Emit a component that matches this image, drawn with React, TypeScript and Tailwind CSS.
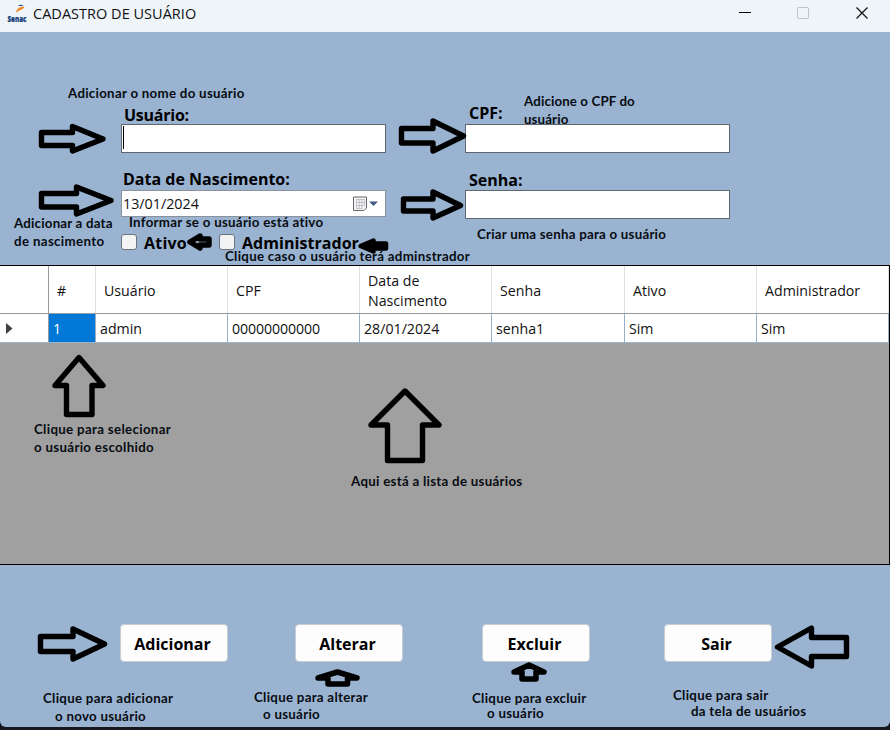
import React from "react";

const arrows: { points: string; width: number; fill?: string }[] = [
  { points: "41.5,132.5 72.5,132.5 72.5,126.5 103,139 72.5,151 72.5,145.5 41.5,145.5", width: 5.4 },
  { points: "41.5,193.5 76.5,193.5 76.5,187 111,200.5 76.5,214 76.5,207 41.5,207", width: 5.4 },
  { points: "401.5,128.5 433,128.5 433,121 463.5,136 433,151 433,143 401.5,143", width: 5.4 },
  { points: "403.5,199 433,199 433,192 460.5,205.5 433,218 433,211 403.5,211", width: 5.4 },
  { points: "209,239 200,239 200,236 190,242 200,248 200,245 209,245", width: 5.5 },
  { points: "386,243.5 373.5,243.5 373.5,240.5 360.5,246 373.5,251.5 373.5,248.5 386,248.5", width: 4.5, fill: "black" },
  { points: "79,357.5 103,385.5 92,385.5 92,414.5 66.5,414.5 66.5,385.5 55,385.5", width: 5.4 },
  { points: "405,391 439,425 422.5,425 422.5,460.5 387.5,460.5 387.5,425 371,425", width: 5.4 },
  { points: "40.5,636.5 73,636.5 73,629 104.5,644 73,659 73,651.5 40.5,651.5", width: 5.4 },
  { points: "337.5,672 357,678 347.5,678 347.5,684 328,684 328,678 318,678", width: 5.5 },
  { points: "529,665 544,672 536,672 536,679 522,679 522,672 514,672", width: 5.5 },
  { points: "777.5,647 811.5,628 811.5,637.5 846.5,637.5 846.5,656.5 811.5,656.5 811.5,666", width: 5.4 },
];

function Note({ className, tracking = "tracking-[0.28px]", children }: { className: string; tracking?: string; children: React.ReactNode }) {
  return (
    <div className={`absolute whitespace-nowrap font-['Lato',sans-serif] text-[13.3px] font-bold leading-[18px] text-[#080c12] ${tracking} ${className}`}>
      {children}
    </div>
  );
}

function Label({ className = "", children }: { className?: string; children: React.ReactNode }) {
  return <label className={`block whitespace-nowrap text-[16px] font-bold leading-[20px] text-black ${className}`}>{children}</label>;
}

function SenacLogo() {
  return (
    <svg className="h-[20px] w-[22px] overflow-visible" viewBox="0 0 22 20">
      <path d="M9.5 9 C9 5.5 11 3 17.5 2.5 C16.5 6 12 5.5 9.5 9Z" fill="#f08a24" />
      <path d="M11 2 Q13.5 -0.5 16.5 2Z" fill="#24508c" />
      <text x="0.5" y="17.5" textLength="19" lengthAdjust="spacingAndGlyphs" fontFamily="Open Sans" fontSize="9.5" fontWeight="800" fill="#143f7c" stroke="#143f7c" strokeWidth=".2">
        Senac
      </text>
    </svg>
  );
}

const headers = ["#", "Usuário", "CPF", "Data de Nascimento", "Senha", "Ativo", "Administrador"];
const values = ["1", "admin", "00000000000", "28/01/2024", "senha1", "Sim", "Sim"];
const columns = "grid grid-cols-[49px_47px_132px_132px_132px_133px_132px_132px]";

function UsersTable() {
  return (
    <div className="h-[300px] border-y border-r border-black bg-[#a0a0a0] text-[14.2px] text-[#111]">
      <div className={`${columns} h-[48px] border-b border-[#979b9f] bg-white`}>
        <div className="border-r border-[#979b9f]" />
        {headers.map((h) => (
          <div key={h} className="flex items-center border-r border-[#dedfe1] pt-[2px] pl-[8px] leading-[20px]">
            <span className="w-[100px]">{h}</span>
          </div>
        ))}
      </div>
      <div className={`${columns} h-[29px] border-b border-[#a0b4c8] bg-white`}>
        <div className="flex items-center border-r border-[#979b9f] pl-[6px] pt-px">
          <svg className="h-[11px] w-[7px]" viewBox="0 0 7 11"><path d="M0 0L6.5 5.5L0 11Z" fill="#404040" /></svg>
        </div>
        {values.map((v, i) => (
          <div key={i} className={`flex items-center border-r border-[#9aafc4] pl-[4px] pt-px ${i === 0 ? "bg-[#0078d7] text-white" : ""} ${i === 2 ? "tracking-[-0.1px]" : ""}`}>{v}</div>
        ))}
      </div>
    </div>
  );
}

function Field({ children }: { children?: React.ReactNode }) {
  return <div className="relative z-10 h-[29px] w-[265px] border border-[#5f676f] bg-white">{children}</div>;
}

function Check() {
  return <span className="h-[16px] w-[16px] rounded-[3px] border border-[#6b747d] bg-[#f3f3f3]" />;
}

function Button({ children }: { children: React.ReactNode }) {
  return <button className="h-[38px] w-[108px] rounded-[4px] border border-[#c8cdd3] bg-[#fdfdfd] pr-[3px] pt-[2px] text-[16px] font-bold text-black">{children}</button>;
}

export default function App() {
  return (
    <div className="relative h-[730px] w-[890px] overflow-hidden bg-[#15191e] font-['Open_Sans','Noto_Sans',sans-serif]">
      <div className="flex h-[727px] flex-col overflow-hidden rounded-b-[6px] bg-[#99b3d0]">
        <header className="flex h-[32px] shrink-0 items-start bg-[#eff4f9] pl-[7px]">
          <div className="mt-[4px]"><SenacLogo /></div>
          <h1 className="ml-[4px] mt-[4px] text-[14.5px] leading-[20px] tracking-[0.02px] text-[#111]">CADASTRO DE USUÁRIO</h1>
          <svg className="ml-auto mr-[21px] mt-[6px] h-[14px] w-[130px]" viewBox="0 0 130 14" fill="none">
            <path d="M0 6.5H12" stroke="#000" />
            <rect x="58.5" y="1.5" width="11" height="11" rx="1" stroke="#bcc1c6" />
            <path d="M117.5 1.5L128.5 12.5M128.5 1.5L117.5 12.5" stroke="#111" strokeWidth="1.2" />
          </svg>
        </header>

        <section className="flex h-[233px] shrink-0 gap-[79px] pl-[121px]">
          <div className="w-[265px] pt-[73px]">
            <Label className="h-[19px] pl-[3px] tracking-[-0.25px]">Usuário:</Label>
            <Field><div className="ml-px mt-px h-[23px] w-px bg-black" /></Field>
            <Label className="mt-[16px] h-[21px] pl-[2px]">Data de Nascimento:</Label>
            <div className="flex h-[27px] w-[265px] items-center border border-[#8a939c] bg-white pl-px text-[14.3px] text-[#111]">
              13/01/2024
              <svg className="ml-auto mr-[7px] h-[16px] w-[25px]" viewBox="0 0 25 16">
                <path d="M0.5 1H13.5V12L11 14.5H0.5Z" fill="#f4f4f4" stroke="#666" />
                <path d="M3 3.5H11.5M3 6.5H11.5M3 9.5H11.5M3 12.5H9.5M3.5 3V12.5M6.2 3V12.5M8.8 3V12.5M11.5 3V10" stroke="#b5bac0" strokeWidth=".8" />
                <path d="M16 5.5H25L20.5 10Z" fill="#405a85" />
              </svg>
            </div>
            <div className="mt-[15px] flex h-[20px] items-center">
              <Check /><Label className="ml-[7px] w-[75px] pt-[2px] tracking-[0.2px]">Ativo</Label>
              <Check /><Label className="ml-[7px] pt-[2px] tracking-[0.05px]">Administrador</Label>
            </div>
          </div>
          <div className="w-[265px] pt-[71px]">
            <Label className="h-[21px] pl-[4px]">CPF:</Label>
            <Field />
            <Label className="mt-[17px] h-[20px] pl-[4px]">Senha:</Label>
            <Field />
          </div>
        </section>

        <UsersTable />

        <footer className="flex pl-[120px] pt-[59px]">
          <Button>Adicionar</Button>
          <div className="ml-[67px]"><Button>Alterar</Button></div>
          <div className="ml-[79px]"><Button>Excluir</Button></div>
          <div className="ml-[74px]"><Button>Sair</Button></div>
        </footer>
      </div>

      <Note className="left-[68px] top-[84px]">Adicionar o nome do usuário</Note>
      <Note tracking="tracking-[0.12px]" className="left-[524px] top-[92px]">Adicione o CPF do<br />usuário</Note>
      <Note tracking="tracking-[0.2px]" className="left-[14px] top-[214px]">Adicionar a data<br /><span className="tracking-[0.35px]">de nascimento</span></Note>
      <Note className="left-[129px] top-[213px]">Informar se o usuário está ativo</Note>
      <Note className="left-[225px] top-[247px]">Clique caso o usuário terá adminstrador</Note>
      <Note tracking="tracking-[0.24px]" className="left-[477px] top-[225px]">Criar uma senha para o usuário</Note>
      <Note tracking="tracking-[0.32px]" className="left-[34px] top-[420px]">Clique para selecionar<br />o usuário escolhido</Note>
      <Note className="left-[351px] top-[472px]">Aqui está a lista de usuários</Note>
      <Note className="left-[43px] top-[689px]">Clique para adicionar<br /><span className="ml-[12px]">o novo usuário</span></Note>
      <Note className="left-[254px] top-[688px]"><span className="block">Clique para alterar</span><span className="-mt-px ml-[9px] block">o usuário</span></Note>
      <Note className="left-[472px] top-[689px]"><span className="block">Clique para excluir</span><span className="-mt-[3px] ml-[15px] block">o usuário</span></Note>
      <Note className="left-[673px] top-[686px]"><span className="block">Clique para sair</span><span className="-mt-[2px] ml-[18px] block">da tela de usuários</span></Note>

      <svg className="pointer-events-none absolute inset-0 z-20 h-[730px] w-[890px]" viewBox="0 0 890 730">
        {arrows.map((a) => (
          <polygon key={a.points} points={a.points} fill={a.fill ?? "none"} stroke="black" strokeWidth={a.width} strokeLinejoin="round" />
        ))}
      </svg>
    </div>
  );
}
